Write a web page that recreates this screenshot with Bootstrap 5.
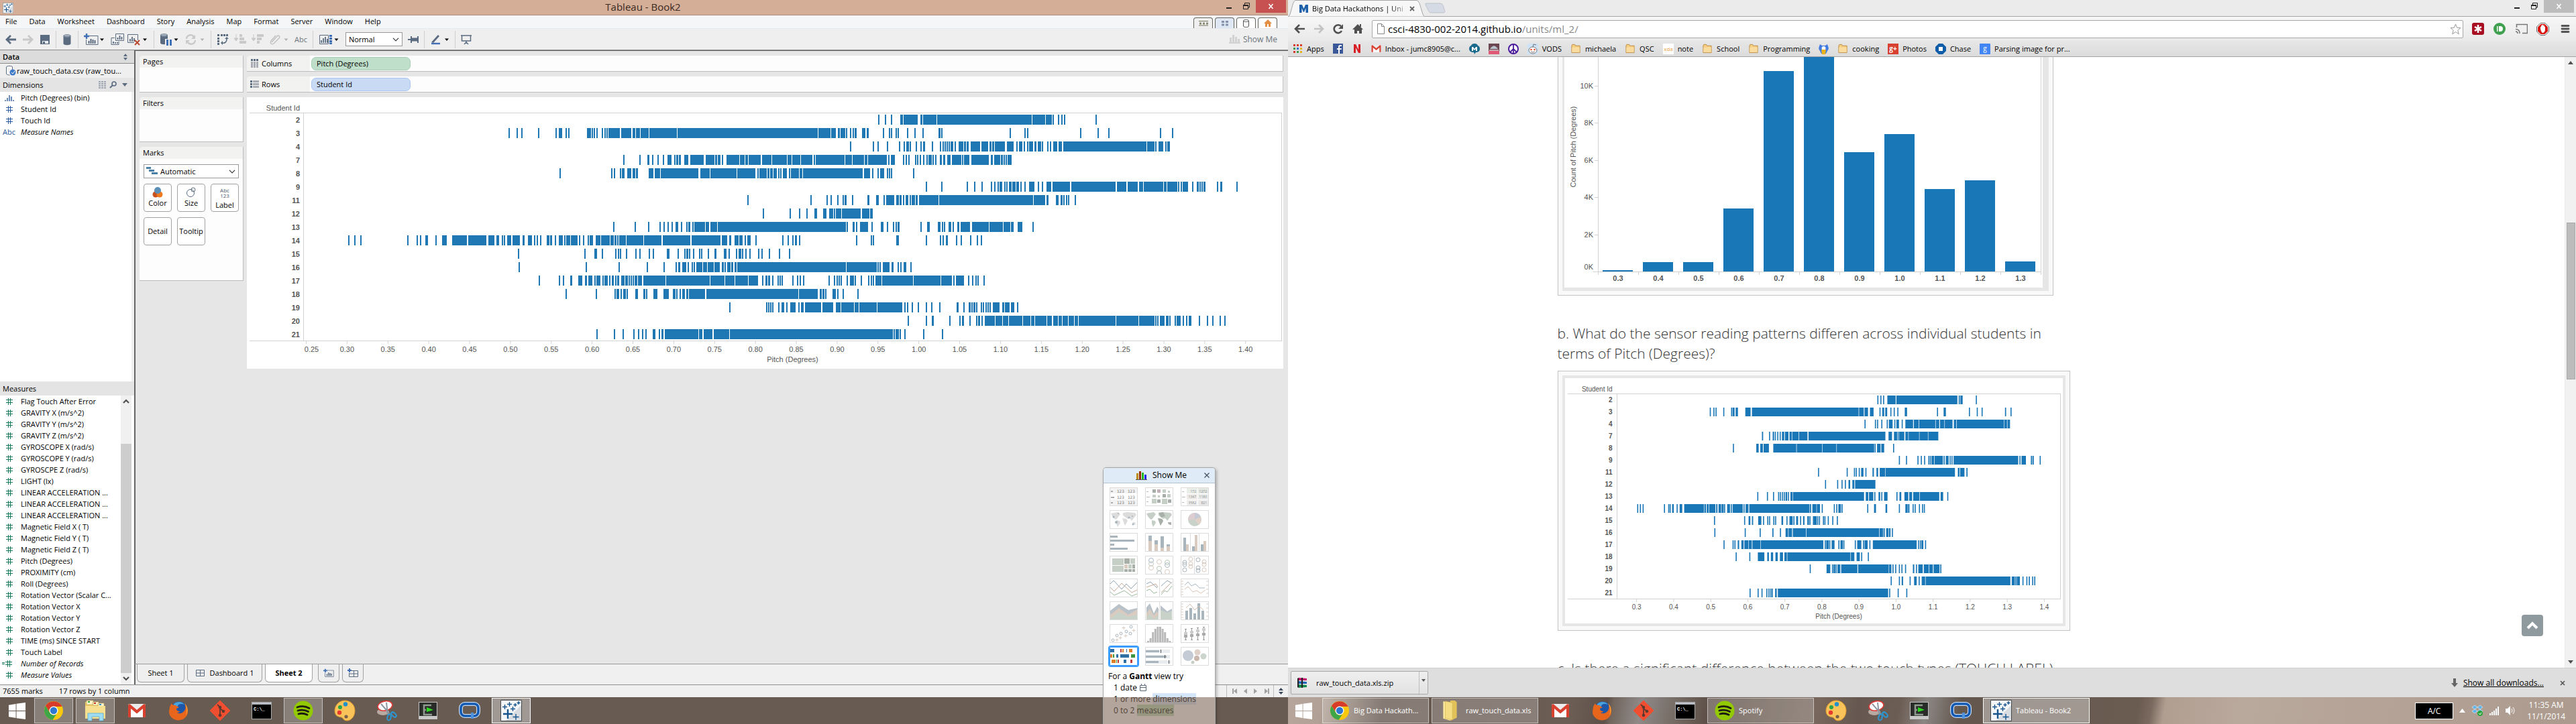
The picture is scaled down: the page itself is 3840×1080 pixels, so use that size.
<!DOCTYPE html>
<html lang="en">
<head>
<meta charset="utf-8">
<title>Tableau - Book2</title>
<link href="https://cdn.jsdelivr.net/npm/bootstrap@5.3.0/dist/css/bootstrap.min.css" rel="stylesheet">
<script src="https://cdn.jsdelivr.net/npm/bootstrap@5.3.0/dist/js/bootstrap.bundle.min.js"></script>
<style>
:root{--ui:"Open Sans","Noto Sans",sans-serif;--chart:"Liberation Sans",Arial,sans-serif}
body{font-family:var(--ui);font-size:11px;line-height:16px;color:#000;overflow:hidden;background:#675b52}
svg{display:block;flex:none}
button{padding:0;border:0;background:none;color:inherit;line-height:inherit}
h1,h2,h3,p,ul{margin:0;padding:0;font-size:inherit;line-height:inherit;font-weight:400}
ul{list-style:none}
.monitor{width:50%;height:100vh}
.min-h0{min-height:0}
.eq{flex:1 1 0}
.t12{font-size:12px}
/* ---- Tableau frame ---- */
.tb-title{height:23px;background:#d5ae98;border-bottom:1px solid #b08d7a}
.tb-title h1{font-size:15px;line-height:21px;color:#3a2a20}
.winctl{height:22px;padding-right:3px}
.winctl .close-x{width:45px;height:19px;margin-left:-8px;background:#c75050}
.winctl .close-x.idle{background:#bcbcbc}
.tb-menu{height:20px;background:#f5f6f8;border-bottom:1px solid #e6e9ee}
.tb-menu .menus{gap:18px}
.tb-menu .views{gap:3px}
.tb-menu a{color:#000;text-decoration:none;line-height:20px}
.viewtab{width:29px;height:16px;border:1px solid #66665c;border-bottom:0;border-radius:4px 4px 0 0;background:#fff}
.viewtab.t1{background:#efefef}.viewtab.t2{background:#dfe6f4}
.tb-tools{height:32px;background:#efefef;border-bottom:1px solid #8c8c8c}
.vsep{width:1px;height:26px;background:#cfcfcf}
.flat-select{border:1px solid #9a9a9a;border-radius:0;font-size:11px;line-height:16px;padding:1px 18px 1px 4px;background-position:right 4px center;background-size:10px 10px;color:#000;height:21px}
.w-fit{width:85px}
.tb-side{width:200px;background:#efefef}
.side-head{height:20px;background:#dcdcdc;border-bottom:1px solid #8c8c8c;line-height:19px;font-weight:600}
.side-src{height:21px;line-height:21px}
.side-sub{height:21px;background:#e4e4e4;line-height:21px}
.fields{background:#fff}
.fields li{height:17px;line-height:17px;display:flex;align-items:center;white-space:nowrap}
.fields .gl{width:31px;display:flex;align-items:center;justify-content:center;padding-right:4px;color:#2c5aa0}
.meas{padding-bottom:6px}
.meas .gl{color:#177a5c}
.calc::before{content:"";width:4px;height:3px;border:solid #177a5c;border-width:1px 0;margin-left:-5px}
.sb{width:16px;background:#f0f0f0}
.sb .sb-thumb{background:#cdcdcd}
.tb-main{background:#e6e6e6;border-left:2px solid #666;border-top:1px solid #666;padding:7px 7px 0 6px;gap:5px}
.shelf-card{width:155px;background:#fdfdfd;border-right:1px solid #bdbdbd;border-bottom:1px solid #bdbdbd;border-radius:5px 0 0 0;overflow:hidden}
.shelf-card h3{height:18px;line-height:18px;background:#f2f2f0;padding-left:5px}
.c-pages{height:55px}.c-filters{height:67px}.c-marks{height:200px}
.col-gap{gap:7px}
.mark-in{margin:8px 6px 0}
.mark-btn{width:42px;height:42px;border:1px solid #a3a3a3;border-radius:4px;background:#fff}
.shelf{height:24px;background:#fdfdfd;border-right:1px solid #c4c4c4;border-bottom:1px solid #bdbdbd;border-radius:5px 0 0 0;overflow:hidden}
.shelf .lab{width:94px;background:#f2f2f0;padding-left:5px}
.pill{width:148px;height:20px;margin:2px;border-radius:7px;line-height:18px;padding-left:7px}
.pill.green{background:#bfdfca;border:1px solid #a8cfb4}.pill.blue{background:#c9daf5;border:1px solid #aac4ee}
.viz{background:#fff;height:405px;padding:0 2px 0 4px;font-family:var(--chart);color:#555}
.viz .vhead{height:23px;width:75px;line-height:32px}
.rowlabs{width:80px;font-weight:700;padding-right:5px}
.rowlabs div{height:20px;line-height:20px}
.plot-top{border-top:1px solid #d2d2d2;border-bottom:1px solid #d2d2d2;height:341px}
.plot-box{border-left:1px solid #d2d2d2;border-right:1px solid #d2d2d2}
.sheet-tabs{height:31px;background:#f0f0f0;border-top:1px solid #9c9c9c;border-left:2px solid #666;padding-left:2px}
.stab{height:27px;border:1px solid #a3a3a3;border-top:0;border-radius:0 0 6px 6px;background:#efefef}
.stab.on{background:#fff;font-weight:700}
.s70{width:71px}.s112{width:112px}.s32{width:32px}
.tb-status{height:19px;background:#f0f0f0;border-top:1px solid #8f8f8f;line-height:18px}
/* ---- Show Me panel ---- */
.showme{position:absolute;right:108px;bottom:0;width:168px;height:383px;background:#fff;border:1px solid #a8a8a8;border-bottom:0;border-radius:5px 5px 0 0;box-shadow:2px 2px 4px #0004;z-index:5;overflow:hidden}
.showme header{height:23px;background:#dfebf6;border-bottom:1px solid #b3c2d0;font-size:12px}
.showme .grid-3{display:grid;grid-template-columns:repeat(3,42px);column-gap:11px;row-gap:6px;padding:6px 0 0 9px}
.thumb{width:42px;height:28px;border:1px solid #dcdcdc;background:#fff}
.thumb.on{outline:2px solid #3b9cff;border-color:#3b9cff;border-radius:2px}
.showme .hint{font-size:12px;line-height:17px;padding:7px 0 0 7px}
.showme .veil{position:absolute;left:0;right:0;bottom:0;height:40px;background:rgba(128,105,90,.6)}
.dimtag{background:#d5e6fb}.mestag{background:#b9dcb9}
/* ---- taskbars ---- */
.taskbar{height:40px;background:#675b52;color:#fff}
.taskbar.wide{background:linear-gradient(100deg,#b7a69b 0,#b0a095 50px,#65574e 140px,#6b5d54 420px,#5e5149 470px,#73675f 480px,#8f8a88 520px,#7b726c 560px,#5e5048 620px,#77675c 780px,#665850 840px,#6c5d54 900px,#8b8683 940px,#64574e 990px,#6b5c52 1250px,#79695e 1270px,#b09e91 1290px,#b9a89c 1400px,#ab9a8d 1920px)}
.tk{height:38px;width:58px;display:flex;align-items:center;justify-content:center}
.tk.start{width:51px}
.tk.run{background:#ffffff38;border:1px solid #ffffff80}
.tk.cur{background:#ffffff60;border:1px solid #fff}
.tk.label{width:159px;justify-content:flex-start;padding-left:10px;gap:6px;white-space:nowrap}
.battery{width:57px;height:25px;line-height:23px;background:#000;border:1px solid #fff}
.clock{line-height:17px}
/* ---- Chrome frame ---- */
.cr-strip{height:25px;background:#ebebeb;border-bottom:1px solid #a5a5a5}
.cr-tab{position:relative;width:204px;height:25px;margin-bottom:-1px}
.cr-tab .shape{position:absolute;left:0;top:0}
.cr-tab .txt{position:relative;height:25px;padding:0 15px 0 17px;gap:6px}
.fade-txt{background:linear-gradient(90deg,#000 115px,#0003 140px);-webkit-background-clip:text;background-clip:text;color:transparent}
.cr-bar{height:36px;background:linear-gradient(#f7f7f7,#e9e9e9);padding:0 9px;gap:13px}
.omni{height:27px;border:1px solid #a9a9a9;border-radius:2px;background:#fff;font-size:15px;line-height:24px;padding:0 2px 0 6px}
.cr-marks{height:24px;background:linear-gradient(#e6e6e6,#dcdcdc);border-bottom:1px solid #a3a3a3;padding:0 8px;gap:13px}
.cr-marks a{color:#000;text-decoration:none;display:flex;align-items:center;gap:6px;white-space:nowrap}
.page-body{background:#fff;overflow:hidden;flex:1 1 0;min-height:0}
.column-text{margin-left:21.1%;width:764px}
.column-text h2{font-family:"Open Sans",sans-serif;font-weight:300;font-size:21px;line-height:30px;color:#333}
.fig-hist{width:739px;height:356px;border:1px solid #c4c4c4;border-top:0;background:#f9f9f9;padding:0 6px 6px 6px;margin:0 0 41px}
.fig-hist .mat{border:solid #e6e6e6;border-width:0 9px 5px 3px;background:#fff;height:349px}
.fig-gantt{width:764px;height:388px;border:1px solid #c4c4c4;background:#f9f9f9;padding:6px;margin:11px 0 41px;font-family:var(--chart);color:#555;font-size:10px}
.fig-gantt .mat{border:4px solid #e6e6e6;background:#fff;height:374px;padding:0 3px 0 4px}
.fig-gantt .vhead{height:23px;width:67px;line-height:34px}
.fig-gantt .rowlabs{width:73px;padding-right:6px}
.fig-gantt .rowlabs div{height:18px;line-height:18px}
.fig-gantt .plot-top{height:307px}
.page-sb{width:17px;background:#f1f1f1;border-left:1px solid #eaeaea}
.page-sb .thumb-v{width:13px;height:234px;background:#bcbcbc;border:1px solid #a8a8a8;flex:none}
.totop{position:absolute;right:49px;bottom:47px;width:32px;height:32px;border-radius:4px;background:#8f9a9f}
.cr-dl{height:44px;background:#dedede;border-top:1px solid #d0d0d0}
.dl-item{width:205px;height:35px;border:1px solid #a9a9a9;border-radius:2px;background:linear-gradient(#efefef,#e2e2e2)}
.dl-item .drop{width:13px;height:33px;border-left:1px solid #bdbdbd}
</style>
</head>
<body>
<svg width="0" height="0" class="position-absolute" aria-hidden="true">
<defs>
<symbol id="i-hash" viewBox="0 0 12 12"><path d="M4.500 1v10M7.500 1v10M1 3.500h10M1 7.500h10" stroke="currentColor" fill="none"/></symbol>
<symbol id="i-caret" viewBox="0 0 8 8"><path d="M1 2.500h6L4 6z" fill="currentColor"/></symbol>
<symbol id="i-win" viewBox="0 0 28 28"><path d="M1 5l11-2v10.500H1zM13 2.800L27 1v12.500H13zM1 14.500h11V25L1 23zM13 14.500h14V27l-14-1.800z" fill="#fff"/></symbol>
<symbol id="i-chrome" viewBox="0 0 30 30"><circle cx="15" cy="15" r="14" fill="#f7c80e"/><path d="M2.900 8A14 14 0 0 1 27.500 9H15a6.500 6.500 0 0 0-6 8z" fill="#d93b2b"/><path d="M2.900 8A14 14 0 0 0 13.500 29L19 20.500a6.500 6.500 0 0 1-10-3z" fill="#3fa648"/><circle cx="15" cy="15" r="6.500" fill="#fff"/><circle cx="15" cy="15" r="5.200" fill="#2f78d2"/></symbol>
<symbol id="i-folders" viewBox="0 0 34 32"><path d="M2 3h8l2 2h18v22H2z" fill="#e8c765"/><path d="M4 1h10v6H4zM13 3h9v5h-9zM21 5h9v5h-9z" fill="#fff6cf" stroke="#c8a850" stroke-width=".6"/><path d="M6 2h3v2H6z" fill="#2fa53e"/><path d="M15 4h3v2h-3z" fill="#c8362b"/><path d="M23 6h3v2h-3z" fill="#2b8fd0"/><path d="M2 9h30v19H2z" fill="#f6e08f"/><path d="M6 20h23v11h-6v-6H12v6H6z" fill="#9fdcf2" stroke="#55acd2" stroke-width=".8"/></symbol>
<symbol id="i-folder1" viewBox="0 0 26 30"><path d="M3 2l10 1v26L3 26z" fill="#f8e79c"/><path d="M13 1h6l3 2v22l-9 4z" fill="#e2c158"/><path d="M6 2l10 2v24L6 26z" fill="#f4dc83" stroke="#d3b34d" stroke-width=".6"/></symbol>
<symbol id="i-gmail" viewBox="0 0 28 24"><rect x="1" y="2" width="26" height="20" rx="2" fill="#ececec"/><path d="M4 22V8l10 8 10-8v14z" fill="#fff"/><path d="M1 4a2 2 0 0 1 3-1.500l10 8.500L24 2.500A2 2 0 0 1 27 4v17a1 1 0 0 1-1 1h-3V9l-9 7.500L5 9v13H2a1 1 0 0 1-1-1z" fill="#d8402f"/></symbol>
<symbol id="i-fox" viewBox="0 0 30 30"><circle cx="16" cy="14" r="12.500" fill="#1f57a8"/><path d="M8 5c5-4 12-4 16 1-5-2-9-1-10 2s-4 2-6 3z" fill="#49a3dd"/><path d="M2 9c0 3-1 5-1 8a14 13 0 0 0 28-1c0-6-2-9-5-12 2 4 2 8 0 11s-7 6-11 3c2 0 4-1 4-2-3 0-5-1-5-4 1-1 3-1 4-2-1-1-4-1-5-3-4 0-6-1-7-3 0 2-1 4-2 5z" fill="#e8661b"/><path d="M24 4c5 5 6 12 2 18 2-6 2-12-2-18z" fill="#fbb034"/></symbol>
<symbol id="i-git" viewBox="0 0 32 32"><path d="M16 1l15 15-15 15L1 16z" fill="#f04e31" stroke="#f04e31" stroke-linejoin="round"/><path d="M12 7l4 4v12M16 13l5 4" stroke="#5b3a30" stroke-width="1.800" fill="none"/><circle cx="16" cy="11" r="2.300" fill="#5b3a30"/><circle cx="16" cy="23" r="2.300" fill="#5b3a30"/><circle cx="21" cy="17" r="2.300" fill="#5b3a30"/></symbol>
<symbol id="i-cmd" viewBox="0 0 30 26"><rect x=".5" y=".5" width="29" height="25" fill="#000" stroke="#a9a9a9"/><rect x="1" y="1" width="28" height="3" fill="#b9bec6"/><text x="3" y="13" font-family="Liberation Mono,monospace" font-size="7" font-weight="700" fill="#fff">C:\_</text></symbol>
<symbol id="i-spot" viewBox="0 0 30 30"><circle cx="15" cy="15" r="14.500" fill="#93c901"/><path d="M6 10c6-2 13-1.500 18 1.500M7 15c5-1.500 11-1 15.500 1.500M8 20c4.500-1.300 9-.8 13 1.300" stroke="#1d1d10" stroke-width="2.800" fill="none" stroke-linecap="round"/></symbol>
<symbol id="i-palette" viewBox="0 0 32 32"><path d="M16 1c8 0 15 6 15 15 0 8-5 15-12 15-5 0-5-4-8-5-5-1-10-2-10-10S8 1 16 1z" fill="#f9c35a" stroke="#e29a2a"/><circle cx="9" cy="11" r="3" fill="#2da34a"/><circle cx="17" cy="6.500" r="3.200" fill="#2490c9"/><circle cx="8" cy="19" r="3.200" fill="#e63b2e"/><circle cx="18" cy="25" r="2.600" fill="#7a6048"/></symbol>
<symbol id="i-snip" viewBox="0 0 32 32"><ellipse cx="11" cy="18" rx="9" ry="5" fill="#b8a9a2"/><ellipse cx="14" cy="9" rx="11" ry="7" fill="#fff" stroke="#dd3b36" stroke-width="1.600" transform="rotate(-12 14 9)"/><path d="M8 6l13 15M16 4l2 18" stroke="#8d979f" stroke-width="2"/><ellipse cx="20" cy="26" rx="2.600" ry="4.500" fill="none" stroke="#2b97d4" stroke-width="2" transform="rotate(14 20 26)"/><ellipse cx="27" cy="22" rx="2.600" ry="4.500" fill="none" stroke="#2b97d4" stroke-width="2" transform="rotate(-45 27 22)"/></symbol>
<symbol id="i-ctm" viewBox="0 0 28 26"><rect x=".5" y=".5" width="27" height="25" fill="#2a2c2a" stroke="#c3c3c3"/><rect x="1" y="21" width="26" height="4" fill="#c9c9c9"/><path d="M19 5H8v14h12M8 12h3" fill="none" stroke="#8f9a8f" stroke-width="2.500"/><path d="M12 8l10 4-10 3z" fill="#2bdc1e"/></symbol>
<symbol id="i-q" viewBox="0 0 32 26"><rect x="3" y="3" width="26" height="18" rx="6" fill="none" stroke="#c9dcf2" stroke-width="6"/><rect x="3" y="3" width="26" height="18" rx="6" fill="none" stroke="#1259b3" stroke-width="3.600"/><path d="M20 16v9" stroke="#4f93dd" stroke-width="4"/></symbol>
<symbol id="i-tab" viewBox="0 0 32 32"><path d="M.5.5h31v31H.5z" fill="#f4f6f8" stroke="#44494e"/><path d="M31 8v23H8z" fill="#d8dbdf"/><path d="M11 14v14M4 21h14" stroke="#16548e" stroke-width="2.400"/><path d="M6.500 7v7M3 10.500h7M13.500 3v7M10 6.500h7M18.500 10v7M15 13.500h7M22 5v5M19.500 7.500h5M27 2v5M24.500 4.500h5M23 21v9M18.500 25.500h9" stroke="#16548e" stroke-width="1.400"/></symbol>
<symbol id="i-bmf" viewBox="0 0 16 16"><path d="M1.500 3.500l1-2h4l1 2h7v11h-13z" fill="#f7cf84" stroke="#b98a40"/><path d="M2 6h12v8H2z" fill="#fbdca0"/></symbol>
<symbol id="i-newsheet" viewBox="0 0 22 18"><path d="M6.500 3.500H21v13H3.500V9" fill="none" stroke="#5b6b80"/><path d="M7.500 15v-4M10.500 15V8M13.500 15v-6M16.500 15v-5" stroke="#5b6b80" stroke-width="2"/><path d="M4 0v8M0 4h8" stroke="#3f6fb5" stroke-width="2.400"/></symbol>
<symbol id="i-cyl" viewBox="0 0 13 18"><path d="M1 3v12c0 3 11 3 11 0V3z" fill="#5b6b80"/><ellipse cx="6.500" cy="3.500" rx="5.500" ry="2.500" fill="#77869a"/><ellipse cx="6.500" cy="3" rx="4" ry="1.300" fill="#a8b2bf"/></symbol>
</defs>
</svg>
<div class="d-flex">

<!-- ============ left monitor: Tableau ============ -->
<section class="monitor d-flex flex-column position-relative">
<div class="flex-fill d-flex flex-column min-h0">
<header class="tb-title d-flex align-items-start">
  <div class="eq"><svg width="16" height="16" class="ms-1 mt-1" viewBox="0 0 32 32"><use href="#i-tab"/></svg></div>
  <h1>Tableau - Book2</h1>
  <div class="winctl eq d-flex align-items-start justify-content-end gap-3">
    <button aria-label="Minimize"><svg width="9" height="20"><path d="M1 11h8v2H1z" fill="#222"/></svg></button>
    <button aria-label="Restore"><svg width="12" height="20"><path d="M1.500 7.500h7v6h-7zM3.500 7V4.500h7V11H9" fill="none" stroke="#222"/><path d="M1 7h8v2H1z" fill="#222"/></svg></button>
    <button class="close-x" aria-label="Close"><svg width="9" height="9" class="m-auto"><path d="M1.500 1l6 7M7.500 1l-6 7" stroke="#fff" stroke-width="1.600"/></svg></button>
  </div>
</header>
<nav class="tb-menu d-flex justify-content-between align-items-end">
  <div class="d-flex menus ps-2"><a href="#">File</a><a href="#">Data</a><a href="#">Worksheet</a><a href="#">Dashboard</a><a href="#">Story</a><a href="#">Analysis</a><a href="#">Map</a><a href="#">Format</a><a href="#">Server</a><a href="#">Window</a><a href="#">Help</a></div>
  <div class="d-flex views pe-3">
    <button class="viewtab t1" aria-label="Worksheet view"><svg width="14" height="9" class="m-auto"><path d="M0 1.500h14M0 8h14" stroke="#77775f"/><path d="M1 3.500h3v3H1zM6 3.500h3v3H6zM11 3.500h3v3h-3z" fill="#8a8a72"/></svg></button>
    <button class="viewtab t2" aria-label="Dashboard view"><svg width="10" height="9" class="m-auto"><path d="M0 1h4v3H0zM6 1h4v3H6zM0 5.500h4v3H0zM6 5.500h4v3H6z" fill="#8492aa"/></svg></button>
    <button class="viewtab" aria-label="Data view"><svg width="9" height="12" class="m-auto"><path d="M.5 2v8c0 2 8 2 8 0V2c0-2-8-2-8 0c0 2 8 2 8 0" fill="none" stroke="#555"/></svg></button>
    <button class="viewtab" aria-label="Start page"><svg width="12" height="11" class="m-auto"><path d="M6 0l6 6H0z" fill="#e58f45"/><path d="M2 6h8v5H7V7H5v4H2z" fill="#e58f45"/></svg></button>
  </div>
</nav>
<div class="tb-tools d-flex align-items-center justify-content-between">
  <div class="d-flex align-items-center gap-2 ps-1 ms-1">
    <button aria-label="Undo"><svg width="17" height="16"><path d="M16 8H3M8 2L2 8l6 6" fill="none" stroke="#5b6b80" stroke-width="2.800"/></svg></button>
    <button aria-label="Redo"><svg width="17" height="16"><path d="M1 8h13M9 2l6 6-6 6" fill="none" stroke="#c9c9c9" stroke-width="2.800"/></svg></button>
    <button aria-label="Save"><svg width="17" height="16"><path d="M2 1h14v14H2z" fill="#5b6b80"/><path d="M5 10h9v4H5z" fill="#e8ebef"/><path d="M6 11h3v3H6z" fill="#5b6b80"/></svg></button>
    <span class="vsep"></span>
    <button aria-label="Connect to data"><svg width="16" height="18" viewBox="-1 0 15 18"><use href="#i-cyl" width="13" height="18"/></svg></button>
    <span class="vsep"></span>
    <button class="d-flex align-items-center" aria-label="New sheet"><svg width="22" height="18"><use href="#i-newsheet"/></svg><svg width="10" height="8"><use href="#i-caret"/></svg></button>
    <div class="d-flex gap-1">
      <button aria-label="Duplicate"><svg width="20" height="18"><path d="M7.500.5h12v10h-12zM6 6.500H1v10h11V12" fill="none" stroke="#5b6b80"/><path d="M10.500 9V6M13.500 9V3M16.500 9V5M4 15v-3M7 15v-2M10 15v-2" stroke="#5b6b80" stroke-width="1.800"/></svg></button>
      <button class="d-flex align-items-center" aria-label="Clear sheet"><svg width="22" height="18"><path d="M11 13.500H1.500v-12h15V10" fill="none" stroke="#5b6b80"/><path d="M5 12V8M8 12V5M11 12V7" stroke="#5b6b80" stroke-width="1.800"/><path d="M12 10l7 7M19 10l-7 7" stroke="#b8472b" stroke-width="2"/></svg><svg width="10" height="8"><use href="#i-caret"/></svg></button>
    </div>
    <span class="vsep"></span>
    <button class="d-flex align-items-center" aria-label="Pause updates"><svg width="19" height="20"><use href="#i-cyl" width="13" height="18"/><path d="M8 9h11v11H8z" fill="#efefef"/><path d="M10 10h3v9h-3zM15 10h3v9h-3z" fill="#3f6fb5"/></svg><svg width="11" height="8"><use href="#i-caret"/></svg></button>
    <button class="d-flex align-items-center gap-1" aria-label="Refresh"><svg width="17" height="16"><path d="M2 7a6 6 0 0 1 11-3M15 9a6 6 0 0 1-11 3" fill="none" stroke="#c9c9c9" stroke-width="2.400"/><path d="M15 1v6H9zM1 15V9h6z" fill="#c9c9c9"/></svg><svg width="9" height="8" class="opacity-25"><use href="#i-caret"/></svg></button>
    <span class="vsep"></span>
    <button aria-label="Swap"><svg width="18" height="17"><path d="M1 1h3v3H1zM6 1h3v3H6zM10 1h3v3h-3zM14 1h3v3h-3zM1 6h3v3H1zM1 10h3v3H1zM1 14h3v3H1z" fill="#5b6b80"/><path d="M8 14c5 1 7-2 7-6" fill="none" stroke="#5b6b80" stroke-width="1.600"/><path d="M12 8h6l-3-3zM9 11v6l-3-3z" fill="#5b6b80"/></svg></button>
    <button aria-label="Sort ascending"><svg width="18" height="17"><path d="M3 1v8M0 7l3 4 3-4z" stroke="#c9c9c9" fill="#c9c9c9"/><path d="M8 1h4v4H8zM8 6h7v4H8zM8 11h10v4H8z" fill="#c9c9c9"/></svg></button>
    <button aria-label="Sort descending"><svg width="18" height="17"><path d="M3 1v8M0 7l3 4 3-4z" stroke="#c9c9c9" fill="#c9c9c9"/><path d="M8 1h10v4H8zM8 6h7v4H8zM8 11h4v4H8z" fill="#c9c9c9"/></svg></button>
    <button class="d-flex align-items-center gap-1" aria-label="Group"><svg width="17" height="16"><path d="M4 12L12 3c2-2 5 0 3 3L7 14c-3 2-6 0-4-4l7-8" fill="none" stroke="#c2c2c2" stroke-width="1.500"/></svg><svg width="9" height="8" class="opacity-25"><use href="#i-caret"/></svg></button>
    <button class="text-secondary" aria-label="Show labels">Abc</button>
    <span class="vsep"></span>
    <button class="d-flex align-items-center" aria-label="Show cards"><svg width="21" height="16"><path d="M1.500 1.500h13v13h-13z" fill="none" stroke="#5b6b80"/><path d="M4 13V9M7 13V6M10 13V4M13 13V7" stroke="#5b6b80" stroke-width="1.800"/><path d="M16 1h4v3h-4zM16 5h4v3h-4zM16 9h4v3h-4zM16 12.500h4v2.500h-4z" fill="#3f6fb5"/></svg><svg width="11" height="8"><use href="#i-caret"/></svg></button>
    <select class="form-select flat-select w-fit" aria-label="Fit"><option>Normal</option></select>
    <button aria-label="Pin"><svg width="16" height="12"><path d="M0 6h5M5 1v10M15 1v10" stroke="#5b6b80" stroke-width="2"/><path d="M5 3.500h9v5H5z" fill="#5b6b80"/></svg></button>
    <span class="vsep"></span>
    <button class="d-flex align-items-center gap-1" aria-label="Highlight"><svg width="17" height="16"><path d="M2 12L12 1l2 2L5 13z" fill="#5b6b80"/><path d="M2 14h13" stroke="#3f6fb5" stroke-width="2.400"/></svg><svg width="8" height="8"><use href="#i-caret"/></svg></button>
    <span class="vsep"></span>
    <button aria-label="Presentation mode"><svg width="16" height="16"><path d="M0 2h16M1.500 2v8h13V2M8 10v2M5 15l3-3 3 3" fill="none" stroke="#5b6b80" stroke-width="1.500"/></svg></button>
  </div>
  <button class="d-flex align-items-center gap-1 text-secondary t12 me-3" aria-label="Show Me"><svg width="17" height="13"><path d="M1 4h3v7H1zM5 0h3v11H5zM9 3h3v8H9zM13 6h3v5h-3zM0 11h17v2H0z" fill="#d2d2d2"/></svg><span>Show Me</span></button>
</div>

<div class="flex-fill d-flex min-h0">
  <aside class="tb-side d-flex flex-column">
    <h2 class="side-head d-flex justify-content-between align-items-center px-1">Data<svg width="9" height="10" class="me-1"><path d="M1 4h6L4 0zM1 6h6L4 10z" fill="#5b6b80"/></svg></h2>
    <div class="side-src d-flex align-items-center ps-2"><svg width="17" height="17"><path d="M1.500 3v10c0 1 3 2 5 2M10.500 7V3c0-2-9-2-9 0" fill="#fff" stroke="#5b6b80"/><circle cx="11" cy="11" r="4.500" fill="#3f7bc8"/><path d="M9 11l2 2 3-4" stroke="#fff" fill="none"/></svg>raw_touch_data.csv (raw_tou...</div>
    <h3 class="side-sub d-flex align-items-center px-1">Dimensions
      <svg width="46" height="11" class="ms-auto me-1"><path d="M1 1h12M1 4h12M1 7h12M1 10h12" stroke="#5b6b80" stroke-dasharray="3 1"/><circle cx="24" cy="4" r="3" fill="none" stroke="#5b6b80" stroke-width="1.600"/><path d="M22 6l-4 4" stroke="#5b6b80" stroke-width="2"/><path d="M36 3h8l-4 5z" fill="#5b6b80"/></svg></h3>
    <ul class="fields flex-fill me-1">
      <li><span class="gl"><svg width="14" height="10"><path d="M1 10V8M4 10V5M7 10V1M10 10V3M13 10V8" stroke="currentColor" stroke-width="1.400"/></svg></span>Pitch (Degrees) (bin)</li>
      <li><span class="gl"><svg width="12" height="12"><use href="#i-hash"/></svg></span>Student Id</li>
      <li><span class="gl"><svg width="12" height="12"><use href="#i-hash"/></svg></span>Touch Id</li>
      <li><span class="gl">Abc</span><i>Measure Names</i></li>
    </ul>
    <h3 class="side-sub px-1">Measures</h3>
    <div class="d-flex bg-white">
      <ul class="fields meas flex-fill" id="measures"></ul>
      <div class="sb d-flex flex-column align-items-center me-1">
        <svg width="16" height="72"><path d="M4 11l4-4 4 4" fill="none" stroke="#505050" stroke-width="2.200"/></svg>
        <div class="sb-thumb w-100 flex-fill"></div>
        <svg width="16" height="17"><path d="M4 6l4 4 4-4" fill="none" stroke="#505050" stroke-width="2.200"/></svg>
      </div>
    </div>
  </aside>
  <div class="flex-fill d-flex flex-column">
  <main class="tb-main flex-fill d-flex">
    <div class="d-flex flex-column col-gap">
      <section class="shelf-card c-pages"><h3>Pages</h3></section>
      <section class="shelf-card c-filters"><h3>Filters</h3></section>
      <section class="shelf-card c-marks"><h3>Marks</h3>
        <div class="position-relative mark-in">
          <select class="form-select flat-select ps-4" aria-label="Mark type"><option>Automatic</option></select>
          <svg width="18" height="12" class="position-absolute top-0 start-0 ms-1 mt-1"><path d="M0 0h7v3H0zM4 4h8v3H4zM8 8h9v3H8z" fill="#4a7fa8"/></svg>
        </div>
        <div class="d-flex flex-wrap gap-2 mark-in">
          <button class="mark-btn"><svg width="16" height="16" class="mx-auto"><circle cx="5" cy="11" r="4.500" fill="#c8501c"/><circle cx="11" cy="11" r="4.500" fill="#ee7a22"/><circle cx="8" cy="5" r="5" fill="#5a8fb8"/></svg>Color</button>
          <button class="mark-btn"><svg width="14" height="16" class="mx-auto"><circle cx="6" cy="9" r="5.500" fill="none" stroke="#5b6b80"/><circle cx="10" cy="4" r="3" fill="none" stroke="#5b6b80"/></svg>Size</button>
          <button class="mark-btn"><svg width="24" height="21" class="mx-auto"><text x="12" y="10" text-anchor="middle" font-size="8" fill="#4a5668">Abc</text><text x="12" y="18" text-anchor="middle" font-size="8" fill="#4a5668">123</text></svg>Label</button>
          <button class="mark-btn">Detail</button>
          <button class="mark-btn">Tooltip</button>
        </div>
      </section>
    </div>
    <div class="flex-fill d-flex flex-column col-gap">
      <div class="shelf d-flex"><div class="lab d-flex align-items-center gap-1"><svg width="13" height="13"><path d="M1 0h3v3H1zM5 0h3v3H5zM9 0h3v3H9z" fill="#5b6b80"/><path d="M1 4h3v9H1zM5 4h3v9H5zM9 4h3v9H9z" fill="#a9adb3"/></svg>Columns</div><div class="pill green">Pitch (Degrees)</div></div>
      <div class="shelf d-flex"><div class="lab d-flex align-items-center gap-1"><svg width="13" height="13"><path d="M0 1h3v3H0zM0 5h3v3H0zM0 9h3v3H0z" fill="#5b6b80"/><path d="M4 1h9v3H4zM4 5h9v3H4zM4 9h9v3H4z" fill="#a9adb3"/></svg>Rows</div><div class="pill blue">Student Id</div></div>
      <div class="viz">
        <div class="vhead text-end">Student Id</div>
        <div class="plot-top d-flex"><div class="rowlabs text-end"></div><div class="plot-box flex-fill"><svg id="plotMain" width="100%" height="339"></svg></div></div>
        <div class="d-flex"><div class="rowlabs"></div><svg id="axisMain" class="flex-fill" width="1" height="36"></svg></div>
      </div>
    </div>
  </main>
  <div class="sheet-tabs d-flex align-items-start gap-1">
    <button class="stab s70">Sheet 1</button>
    <button class="stab s112 d-flex align-items-center justify-content-center gap-2"><svg width="13" height="10"><path d="M.5.5h12v9H.5zM.5 5h12M6.500.5v9" fill="none" stroke="#5b6b80"/></svg>Dashboard 1</button>
    <button class="stab on s70">Sheet 2</button>
    <button class="stab s32 ms-1" aria-label="New worksheet"><svg width="16" height="14" class="m-auto" viewBox="0 0 22 18"><use href="#i-newsheet"/></svg></button>
    <button class="stab s32" aria-label="New dashboard"><svg width="16" height="14" class="m-auto"><path d="M5 3.500h10.500v9h-13V7M3 8h12M9.500 4v8" fill="none" stroke="#5b6b80"/><path d="M3 0v6M0 3h6" stroke="#3f6fb5" stroke-width="2"/></svg></button>
  </div>
  </div>
</div>
<footer class="tb-status d-flex align-items-center">
  <span class="ms-1">7655 marks</span><span class="ms-4">17 rows by 1 column</span>
  <svg width="92" height="18" class="ms-auto"><path d="M.5 0v18M70.500 0v18" stroke="#bdbdbd"/><path d="M9 5h2v8H9zM16 5v8l-5-4zM31 5v8l-5-4zM41 5v8l5-4zM57 5v8l5-4zM62 5h2v8h-2z" fill="#a2a2a2"/><path d="M78 8h7l-3.500-4zM78 10h7l-3.500 4z" fill="#3d4a5c"/></svg>
</footer>
</div>
<footer class="taskbar d-flex align-items-center">
  <button class="tk start" aria-label="Start"><svg width="27" height="27"><use href="#i-win"/></svg></button>
  <div class="d-flex gap-1 flex-fill" id="taskLeft"></div>
</footer>

<aside class="showme">
  <header class="d-flex align-items-center"><svg width="17" height="13" class="ms-5"><path d="M1 3h3v9H1z" fill="#c08a00"/><path d="M5 0h3v12H5z" fill="#962b00"/><path d="M9 2h3v10H9z" fill="#22b522"/><path d="M13 5h3v7h-3z" fill="#2222ee"/><path d="M0 12h17v1H0z" fill="#555"/></svg><span class="ms-2">Show Me</span>
  <button class="ms-auto me-2" aria-label="Close Show Me"><svg width="8" height="8"><path d="M.5.5l7 7M7.500.5l-7 7" stroke="#4a5668" stroke-width="1.400"/></svg></button></header>
  <div class="grid-3" id="thumbs"></div>
  <div class="hint">For a <b>Gantt</b> view try<div class="d-flex align-items-center gap-1 ps-1 ms-1">1 date <svg width="10" height="11"><path d="M.5 2.500h9v8h-9zM.5 5.500h9M2.500 0v3M7.500 0v3" fill="none" stroke="#5b6b80"/></svg></div><div class="ps-1 ms-1">1 or more <span class="dimtag">dimensions</span></div><div class="ps-1 ms-1">0 to 2 <span class="mestag">measures</span></div></div>
  <div class="veil"></div>
</aside>
</section>

<!-- ============ right monitor: Chrome ============ -->
<section class="monitor d-flex flex-column">
<div class="flex-fill d-flex flex-column min-h0">
<header class="cr-strip d-flex justify-content-between align-items-start">
  <div class="d-flex align-items-center">
    <div class="cr-tab"><svg class="shape" width="204" height="25"><path d="M0 25C5 24 6 1 11 .5H192C198 1 199 24 204 25z" fill="#f7f7f7" stroke="#a5a5a5"/></svg>
      <div class="txt d-flex align-items-center"><svg width="13" height="12"><path d="M0 0h4l2.500 6L9 0h4v12H9.500V5L7 11H6L3.500 5v7H0z" fill="#1d5fa8"/></svg><span class="fade-txt">Big Data Hackathons | Uni</span><button class="ms-auto" aria-label="Close tab"><svg width="8" height="8"><path d="M1 1l6 6M7 1L1 7" stroke="#666" stroke-width="1.800"/></svg></button></div></div>
    <button aria-label="New tab"><svg width="32" height="16"><path d="M1 1h22q3 0 4 3l3 9q0 2-2 2H9q-2 0-3-2L1 3z" fill="#d5dbe4" stroke="#bfc3c9"/></svg></button>
  </div>
  <div class="winctl d-flex align-items-start gap-3">
    <button aria-label="Minimize"><svg width="9" height="20"><path d="M1 11h8v2H1z" fill="#222"/></svg></button>
    <button aria-label="Restore"><svg width="12" height="20"><path d="M1.500 7.500h7v6h-7zM3.500 7V4.500h7V11H9" fill="none" stroke="#222"/><path d="M1 7h8v2H1z" fill="#222"/></svg></button>
    <button class="close-x idle" aria-label="Close"><svg width="9" height="9" class="m-auto"><path d="M1.500 1l6 7M7.500 1l-6 7" stroke="#fff" stroke-width="1.600"/></svg></button>
  </div>
</header>
<div class="cr-bar d-flex align-items-center">
  <button aria-label="Back"><svg width="16" height="16"><path d="M16 8H3M8 2L2 8l6 6" fill="none" stroke="#505050" stroke-width="2.600"/></svg></button>
  <button aria-label="Forward"><svg width="16" height="16"><path d="M1 8h12M8 2l6 6-6 6" fill="none" stroke="#c3c3c3" stroke-width="2.600"/></svg></button>
  <button aria-label="Reload"><svg width="16" height="16"><path d="M13 11a6 6 0 1 1-1-7" fill="none" stroke="#505050" stroke-width="2.600"/><path d="M15 1v7H8z" fill="#505050"/></svg></button>
  <button aria-label="Home"><svg width="16" height="16"><path d="M8 1l8 8h-2v6h-4v-4H7v4H3V9H0zM11 1h2v4h-2z" fill="#505050"/></svg></button>
  <div class="omni flex-fill d-flex align-items-center gap-1">
    <svg width="13" height="16"><path d="M1.500.5h6l4 4v11h-10zM7.500.5v4h4" fill="#fff" stroke="#888"/></svg>
    <a href="#" class="text-black text-decoration-none flex-fill">csci-4830-002-2014.github.io<span class="text-black-50">/units/ml_2/</span></a>
    <button aria-label="Bookmark this page"><svg width="17" height="17"><path d="M8.500 1l2.200 5.300 5.300.3-4.200 3.600 1.500 5.600-4.800-3.200-4.800 3.200 1.500-5.600L1 6.600l5.300-.3z" fill="#fff" stroke="#999"/></svg></button>
  </div>
  <button aria-label="LastPass"><svg width="19" height="18"><rect width="18" height="18" rx="3" fill="#a80f22"/><path d="M9 3v12M4 6l10 6M14 6L4 12" stroke="#fff" stroke-width="2.600"/></svg></button>
  <button aria-label="Pushbullet"><svg width="19" height="18"><circle cx="9" cy="9" r="9" fill="#3fa050"/><path d="M5 5h1.500v8H5zM8 5h2q4 0 4 4t-4 4H8z" fill="#fff"/></svg></button>
  <button aria-label="Cast"><svg width="19" height="16"><path d="M2.500 6V1.500h16v13H11" fill="none" stroke="#777" stroke-width="1.600"/><path d="M1 12q3 0 3 3M1 8.500q6 0 6 6.500" fill="none" stroke="#777" stroke-width="1.500"/></svg></button>
  <button aria-label="Adblock"><svg width="19" height="19"><path d="M6 .5h7L18.500 6v7L13 18.500H6L.5 13V6z" fill="#fff" stroke="#666"/><path d="M6.500 2h6L17 6.500v6L12.500 17h-6L2 12.500v-6z" fill="#d8150f"/><path d="M6 9V6h1V4h1.500V3h1.500v1H12v2h1v5q-1 4-4 4-2-1-3-6z" fill="#fff"/></svg></button>
  <button class="ms-1" aria-label="Menu"><svg width="14" height="14"><path d="M2 2.500h10M2 7h10M2 11.500h10" stroke="#555" stroke-width="2.800" stroke-linecap="round"/></svg></button>
</div>
<nav class="cr-marks d-flex align-items-center">
  <a href="#"><svg width="14" height="14"><path d="M0 0h3v3H0zM0 10h3v3H0z" fill="#d83b2b"/><path d="M5 0h3v3H5zM10 0h3v3h-3z" fill="#d83b2b"/><path d="M0 5h3v3H0zM5 10h3v3H5z" fill="#3c9a46"/><path d="M5 5h3v3H5z" fill="#2f6fd0"/><path d="M10 5h3v3h-3zM10 10h3v3h-3z" fill="#e8b21e"/></svg>Apps</a>
  <a href="#" aria-label="Facebook"><svg width="15" height="15"><path d="M0 0h15v15H0z" fill="#3b5998"/><path d="M8 15V9H6V7h2V5q0-3 3-3h2v2h-2q-1 0-1 1v2h3l-.5 2H10v6z" fill="#fff"/></svg></a>
  <a href="#" aria-label="Netflix"><svg width="16" height="13"><path d="M3 0h3l4 8V0h3v13h-3L6 5v8H3z" fill="#d81f26"/></svg></a>
  <a href="#"><svg width="15" height="13" viewBox="0 0 28 24"><use href="#i-gmail"/></svg>Inbox - jumc8905@c...</a>
  <a href="#" aria-label="M"><svg width="16" height="16"><path d="M8 0q4 0 5 3 3 1 3 5 0 5-6 5l-2 3-1-3Q0 13 0 8q0-4 3-5 1-3 5-3z" fill="#1a6a8e"/><path d="M4 11V5h2l2 3 2-3h2v6h-2V8l-2 2-2-2v3z" fill="#fff"/></svg></a>
  <a href="#" aria-label="Band"><svg width="16" height="16"><path d="M0 0h16v16H0z" fill="#6c4752"/><path d="M2 8q6-9 12 0z" fill="#b8c3d0"/><path d="M0 11h16v5H0z" fill="#e05a78"/><path d="M1 9h14v2H1z" fill="#c9a9b0"/></svg></a>
  <a href="#" aria-label="Peace"><svg width="16" height="16"><circle cx="8" cy="8" r="7" fill="#fff" stroke="#4b1a9a" stroke-width="2"/><path d="M8 1v14M8 8l-5 5M8 8l5 5" stroke="#4b1a9a" stroke-width="1.800"/></svg></a>
  <a href="#"><svg width="16" height="16"><path d="M0 0h16v16H0z" fill="#cfe3f7"/><ellipse cx="8" cy="10" rx="6" ry="5" fill="#fff" stroke="#555" stroke-width=".8"/><circle cx="5.500" cy="9" r="1.300" fill="#f04b23"/><circle cx="10.500" cy="9" r="1.300" fill="#f04b23"/><path d="M5 12q3 2 6 0M8 5l1-4 4 1" fill="none" stroke="#555" stroke-width=".8"/></svg>VODS</a>
  <a href="#"><svg width="16" height="15"><use href="#i-bmf"/></svg>michaela</a>
  <a href="#"><svg width="16" height="15"><use href="#i-bmf"/></svg>QSC</a>
  <a href="#"><svg width="16" height="16"><path d="M0 0h16v16H0z" fill="#fff"/><text x="8" y="11" font-size="8" text-anchor="middle" fill="#f0a23c">xda</text></svg>note</a>
  <a href="#"><svg width="16" height="15"><use href="#i-bmf"/></svg>School</a>
  <a href="#"><svg width="16" height="15"><use href="#i-bmf"/></svg>Programming</a>
  <a href="#" aria-label="Cat"><svg width="15" height="16"><path d="M2 1l3 2h5l3-2 1 3q2 4-1 7l-2 4H4l-2-4q-3-3-1-7z" fill="#3f7be0"/><circle cx="7.500" cy="7" r="3" fill="#fff"/><path d="M4 9h7l-1 7H5z" fill="#e9b31c"/></svg></a>
  <a href="#"><svg width="16" height="15"><use href="#i-bmf"/></svg>cooking</a>
  <a href="#"><svg width="16" height="16"><path d="M0 0h16v16H0z" fill="#d8402f"/><text x="8" y="11" font-size="10" text-anchor="middle" font-weight="700" fill="#fff">g+</text></svg>Photos</a>
  <a href="#"><svg width="16" height="16"><path d="M5 0h6l5 5v6l-5 5H5l-5-5V5z" fill="#0f5ca8"/><path d="M5 5h6v6H5z" fill="#fff"/></svg>Chase</a>
  <a href="#"><svg width="16" height="16"><rect width="16" height="16" rx="1" fill="#4285f4"/><text x="8" y="11" font-size="10" text-anchor="middle" fill="#fff">g</text></svg>Parsing image for pr...</a>
</nav>
<div class="d-flex position-relative page-body">
  <article class="flex-fill overflow-hidden">
   <div class="column-text">
    <figure class="fig-hist"><div class="mat"><svg id="hist" width="713" height="344"></svg></div></figure>
    <h2>b. What do the sensor reading patterns differen across individual students in terms of Pitch (Degrees)?</h2>
    <figure class="fig-gantt"><div class="mat">
      <div class="vhead text-end">Student Id</div>
      <div class="plot-top d-flex"><div class="rowlabs text-end"></div><div class="plot-box flex-fill"><svg id="plotSmall" width="100%" height="305"></svg></div></div>
      <div class="d-flex"><div class="rowlabs"></div><svg id="axisSmall" class="flex-fill" width="1" height="34"></svg></div>
    </div></figure>
    <h2 class="text-nowrap">c. Is there a significant difference between the two touch types (TOUCH LABEL)</h2>
   </div>
   <button class="totop" aria-label="Back to top"><svg width="18" height="14" class="m-auto"><path d="M2 11l7-7 7 7" fill="none" stroke="#fff" stroke-width="4"/></svg></button>
  </article>
  <div class="page-sb d-flex flex-column align-items-center">
    <svg width="16" height="247"><path d="M4 11h8L8 6z" fill="#505050"/></svg><div class="thumb-v"></div>
    <svg width="16" height="16" class="mt-auto"><path d="M4 5h8l-4 5z" fill="#505050"/></svg>
  </div>
</div>
<footer class="cr-dl d-flex align-items-center justify-content-between ps-1 pe-3">
  <div class="dl-item d-flex align-items-center ps-2">
    <svg width="17" height="17"><path d="M3 1l12 1v3L3 5z" fill="#c0156c"/><path d="M3 6l12 1v3L3 10z" fill="#1f66b8"/><path d="M3 11l12 1v3L3 16z" fill="#128a4c"/><path d="M1 2l2-1v15l-2-1zM7 1h2v15H7z" fill="#222"/></svg>
    <span class="ms-2 ps-1">raw_touch_data.xls.zip</span><button class="drop ms-auto" aria-label="Download options"><svg width="6" height="4" class="mx-auto mb-2"><path d="M0 0h6L3 4z" fill="#555"/></svg></button>
  </div>
  <div class="d-flex align-items-center gap-2 t12"><svg width="10" height="14"><path d="M3 0h4v7h3l-5 6-5-6h3z" fill="#666"/></svg><a href="#" class="text-black">Show all downloads...</a><button class="ms-3" aria-label="Close downloads"><svg width="8" height="8"><path d="M1 1l6 6M7 1L1 7" stroke="#555" stroke-width="1.600"/></svg></button></div>
</footer>
</div>
<footer class="taskbar wide d-flex align-items-center">
  <button class="tk start" aria-label="Start"><svg width="27" height="27" class="me-1"><use href="#i-win"/></svg></button>
  <div class="d-flex gap-1 flex-fill" id="taskRight"></div>
  <div class="d-flex align-items-center gap-2 pe-3">
    <div class="battery text-center t12">A/C</div>
    <svg width="12" height="8"><path d="M1 7h9L5.500 1z" fill="#fff"/></svg>
    <svg width="17" height="18"><path d="M4 1l4 3-4 3-4-3zM12 1l4 3-4 3-4-3zM4 7l4 3-4 3-4-3zM12 7l4 3-4 3-4-3z" fill="#5fb4ec" stroke="#fff" stroke-width=".5"/><circle cx="12" cy="13" r="4" fill="#2aa53c"/><path d="M10 13l2 2 2-3" stroke="#fff" fill="none"/></svg>
    <svg width="16" height="16"><path d="M1 12h2v3H1zM4 10h2v5H4zM7 8h2v7H7zM10 5h2v10h-2zM13 2h2v13h-2z" fill="#fff"/></svg>
    <svg width="17" height="16"><path d="M1 5h3l4-4v14l-4-4H1z" fill="#fff"/><path d="M10 5q2 3 0 6M12 3q4 5 0 10" fill="none" stroke="#fff"/></svg>
    <div class="clock text-center t12 ms-2">11:35 AM<br>11/1/2014</div>
  </div>
</footer>
</section>
</div>

<script>
/* Field list; "*" marks generated fields, "=" a calculated one */
const fields = ["Flag Touch After Error","GRAVITY X (m/s^2)","GRAVITY Y (m/s^2)","GRAVITY Z (m/s^2)","GYROSCOPE X (rad/s)","GYROSCOPE Y (rad/s)","GYROSCPE Z (rad/s)","LIGHT (lx)","LINEAR ACCELERATION ...","LINEAR ACCELERATION ...","LINEAR ACCELERATION ...","Magnetic Field X ( T)","Magnetic Field Y ( T)","Magnetic Field Z ( T)","Pitch (Degrees)","PROXIMITY (cm)","Roll (Degrees)","Rotation Vector (Scalar C...","Rotation Vector X","Rotation Vector Y","Rotation Vector Z","TIME (ms) SINCE START","Touch Label","*=Number of Records","*Measure Values"];
measures.innerHTML = fields.map(f => {
  const t = f.replace(/^\*=?/, "");
  return `<li><span class="gl ${f.startsWith("*=") ? "calc" : ""}"><svg width="12" height="12"><use href="#i-hash"/></svg></span>${f[0] === "*" ? `<i>${t}</i>` : t}</li>`;
}).join("");

/* Taskbar buttons: icon, width, height, state, caption */
const apps = [["chrome",30,30,"run","Big Data Hackath..."],["folders",34,32,"run","raw_touch_data.xls"],["gmail",28,24,""],["fox",30,30,""],["git",32,32,""],["cmd",30,26,""],["spot",30,30,"run","Spotify"],["palette",32,32,""],["snip",32,32,""],["ctm",28,26,""],["q",32,26,""],["tab",32,32,"cur","Tableau - Book2"]];
const task = captions => apps.map(([n,w,h,s,c]) => {
  const icon = captions && n === "folders" ? "folder1" : n;
  return `<button class="tk ${s} ${captions && c ? "label" : ""}" aria-label="${c || n}"><svg width="${w}" height="${h}"><use href="#i-${icon}"/></svg>${captions && c ? c : ""}</button>`;
}).join("");
taskLeft.innerHTML = task(false);
taskRight.innerHTML = task(true);

/* Readings per student. Axis units: 186 is the left edge of the plot, 3113 the right one; the second list starts at 1568. */
const U0 = 186, UW = 2927, HI = 1568;
const students = {
2:["","338 358 376 404-412 414-456 464-470 472-513 515-798 800-838 840-858 860 876 887 895 989"],
3:["798 822 836 887 939 949-959 969 977 1033-1045 1047 1053 1061 1077 1086 1092 1098-1132 1136-1166 1170-1178 1180-1192 1194-1218 1220-1303 1305-1568","0-157 159-195 197-211 217-223 225-239 241 253 261 267-273 289-300 304-310 352 370 376 390 396 424 446 470 519-525 527 732 776 784 943 995 1027 1182 1218"],
4:["","253 322 336 364 400 414 422-430 432 450 464 472-478 499 523 531 537 543 549 555-563 567 579-593 595-601 603-609 615-643 647-667 671-677 679-685 688-718 724-744 752 760-770 774 784 790-802 806-812 816-826 828 844 852 862-874 878-889 893-1142 1144-1166 1168 1178-1192 1198 1204-1212"],
7:["1143-1148 1190 1214-1220 1228 1244 1260 1275-1287 1295 1301-1307 1309 1311 1325-1337 1343-1383 1389-1415 1417-1423 1425-1433 1437 1451-1490 1492-1506 1508-1516 1518-1554 1558-1568","0-18 20-64 66-78 80-105 107-141 145 151-237 239-259 261-296 298-306 308-364 368 376-388 412 420 428 448 454 462 472 482 488-498 500-504 509 523-529 533-539 545-555 559-587 589-593 595-611 617-669 675-681 685-703 705-711 713 719 725-738"],
8:["951 1106 1114 1132 1138-1146 1154-1166 1170-1178 1180-1186 1218-1232 1236-1252 1254-1367 1373-1401 1403-1482 1484-1538 1544 1550-1568","0-4 6-12 14-22 24-34 38 44 52-64 70 76-101 103-111 113-291 296-314 320 336 344-356 364 370 376 442"],
9:["","480 527 603 625 647 675 685 696 702-710 716-720 722-726 730-738 740-750 752-760 764 776 790-806 816 828 842-856 860-913 917-1049 1053-1082 1084-1110 1112 1120-1132 1134-1192 1194-1202 1204-1234 1236 1244 1250-1266 1277 1291-1297 1299-1303 1305 1311-1317 1353 1363-1369 1411"],
11:["1514","135 183 195 215 231 237-243 259 306-312 332-340 354 362-386 392-400 402-408 412 420-428 432 438-448 450-456 460-519 521-802 804-838 842-848 870-878 885-891 893 901 907 927"],
12:["1560","72 101 123 147-155 173-183 191-203 205 211-227 229-285 289-312 314-322"],
13:["1112 1176 1216 1250 1262 1275 1287 1299-1307 1315 1331 1337-1343 1349 1355-1387 1389-1399 1403-1423 1425-1568","0-241 243 261-267 271 283-308 318 346-354 364 382 390 396-402 464 484-493 517-525 529 535 549-557 561 575-581 585-613 619-669 671-712 714-734 736-744 756-770 800"],
14:["318 336 354 495 523 533 549-557 579 599-613 629-647 649-675 679-734 738-756 762-770 778 784 794-806 810-832 840-846 856-864 866 876 883 893 913-921 923-929 937 949-961 965 971-983 985-1005 1009 1021 1035 1041-1051 1059-1073 1075-1102 1104-1114 1116-1122 1124 1130-1150 1152-1202 1204-1256 1260-1343 1347-1433 1437-1453 1459-1465 1476-1488 1490-1500 1506 1514-1524 1538","50 66 80 88-94 101 271 316 322 392-400 480 523 531 541-547 571 585 613 633 645"],
15:["826 1025 1055-1063 1077-1082 1118 1126 1132 1150 1178 1190 1218 1230 1272-1280 1305 1325 1331-1337 1339 1351 1369 1375 1395 1415-1421 1443-1451 1457 1480 1488-1496 1498 1508 1520 1546 1556","10 40 70"],
16:["828 1029 1128 1212 1262 1299 1307-1313 1319-1331 1335 1347 1353 1361-1379 1381-1393 1395-1413 1415-1431 1437-1443 1445 1453-1463 1465-1472 1476-1482 1484-1568","0-241 243-334 336 342 352-372 378-384 396 404 414-422 434"],
17:["889 949 961 983-989 1007-1019 1027-1033 1037-1049 1055 1061-1073 1080 1086-1096 1100 1108-1114 1118 1124-1130 1136-1146 1148-1156 1158 1164 1170 1176-1184 1186-1198 1202-1268 1270-1401 1403-1445 1447-1476 1478-1516 1518-1546 1558","0-6 8-14 20 36 42 48 80 94 103 113 189 205 213 219 225 243 253-265 267 285 308 316 322 330-348 350-442 444-525 527-559 563 571-595 607 619 629 635 653"],
18:["969 1059 1116 1122-1130 1134 1142-1150 1152 1178-1186 1202-1208 1210 1232-1244 1262-1279 1291-1299 1301 1311 1319-1327 1331-1337 1339-1387 1391-1568","0-99 101-157 163-169 171-177 179 201-211 215 231 275"],
19:["1459","2 8 14 20 38 48-56 62 74-90 99 107-115 119-167 171-203 211-225 227-265 267-279 281-334 336-410 416 424 438 456 480 497 521 573-579 593 609-615 617 623-629 631 645 651 659 665 671 681-702 710-716 718-732 736-746 754"],
20:["","426 480 499-505 551 581 589-595 611 631 637-643 647 657-688 690-710 712-728 730-770 772-794 796-806 808-842 844-858 862-876 878-889 891-907 909-925 927-937 939-1049 1051-1118 1120-1166 1168 1174 1182-1196 1200-1208 1210 1226 1232-1244 1250 1260 1268-1277 1297 1323 1339 1361 1375"],
21:["1061 1114 1140 1172 1186 1198 1208 1230-1238 1248 1256-1262 1266-1367 1369-1379 1383-1409 1413-1459 1461-1568","0-382 384 390-400 402 416 472 529"]
};
const parse = (s, off) => s ? s.split(" ").map(t => { const [a,b] = t.split("-").map(Number); return [a + off, (b || a + 4) + off]; }) : [];
const rows = Object.entries(students).map(([id,[lo,hi]]) => [id, [...parse(lo,0), ...parse(hi,HI)]]);
document.querySelectorAll(".plot-top .rowlabs").forEach(el => el.innerHTML = rows.map(r => `<div>${r[0]}</div>`).join(""));

function gantt(svg, rowH, top, barH, color, coarse) {
  const k = svg.getBoundingClientRect().width / UW;
  svg.innerHTML = rows.map(([id, segs], i) => {
    const out = [];
    for (const [a,b] of segs) {
      let x0 = (a - U0) * k, x1 = (b - U0) * k;
      if (coarse) { x0 -= .3; x1 += .4; } else { x0 = Math.round(x0); x1 = x0 + Math.max(2, Math.round((b - a) * k)); }
      const last = out[out.length - 1];
      if (coarse && last && x0 - last[1] < .5) last[1] = x1; else out.push([x0, x1]);
    }
    const y = top + i * rowH;
    return `<path fill="${color}" d="${out.map(([p,q]) => `M${+p.toFixed(1)} ${y}H${+q.toFixed(1)}v${barH}H${+p.toFixed(1)}z`).join("")}"><title>Student ${id}</title></path>`;
  }).join("");
}
function axis(svg, from, to, step, digits, size, labelY, titleY) {
  let s = "";
  for (let n = 0; from + n * step <= to + 1e-6; n++) {
    const v = from + n * step, p = (v - .2463) / 1.1983 * 100;
    s += `<line x1="${p}%" x2="${p}%" y1="0" y2="4" stroke="#d2d2d2"/><text x="${n === 0 && from < .3 ? p + .55 : p}%" y="${labelY}" text-anchor="middle">${v.toFixed(digits)}</text>`;
  }
  svg.innerHTML = `<g font-size="${size}" fill="#555">${s}<text x="50%" y="${titleY}" text-anchor="middle">Pitch (Degrees)</text></g>`;
}
function drawHist() {
  const heights = [2,14,14,94,299,330,178,205,123,136,15];
  let s = `<path d="M50.500 0V321M43 320.500H711M710.500 0V325" stroke="#d2d2d2" fill="none"/>`;
  [["10K",43],["8K",98],["6K",154],["4K",209],["2K",265],["0K",313]].forEach(([t,y],i) => {
    s += `<text x="43" y="${y+4}" text-anchor="end">${t}</text>` + (i < 5 ? `<path d="M45 ${y+.5}h5" stroke="#d2d2d2"/>` : "");
  });
  heights.forEach((h,i) => {
    s += `<rect x="${57+60*i}" y="${320-h}" width="45" height="${h}" fill="#1976b7"/><path d="M${50.5+60*i} 320v5" stroke="#d2d2d2"/><text x="${80+60*i}" y="334" text-anchor="middle" font-weight="700">${((i+3)/10).toFixed(1)}</text>`;
  });
  s += `<text x="17" y="134" text-anchor="middle" transform="rotate(-90 17 134)">Count of Pitch (Degrees)</text>`;
  hist.innerHTML = `<g font-family="Liberation Sans,Arial,sans-serif" font-size="11" fill="#555">${s}</g>`;
}
function draw() {
  gantt(plotMain, 20, 2, 15, "#1f77b4", false);
  gantt(plotSmall, 18, 2, 13, "#1976b7", true);
  axis(axisMain, .25, 1.4, .05, 2, 11, 16, 31);
  axis(axisSmall, .3, 1.4, .1, 1, 10, 15, 29);
  drawHist();
}
draw();
addEventListener("resize", draw);

/* Show Me chart-type thumbnails, 40 x 26 each */
const B="#a9b5bd",T="#d9cbc0",G="#c6cfc6",D="#a8aea8";
const r=(x,y,w,h,c)=>`<rect x="${x}" y="${y}" width="${w}" height="${h}" fill="${c}"/>`;
const c=(x,y,q,f,st)=>`<circle cx="${x}" cy="${y}" r="${q}" fill="${f}" ${st?`stroke="${st}"`:""}/>`;
const l=(d,col)=>`<path d="${d}" fill="none" stroke="${col}"/>`;
const p=(d,col)=>`<path d="${d}" fill="${col}"/>`;
const land="M1 4l5-1 6-1 3 3-3 4-3 4-3-1-3-4zM9 14l5 1 1 3-4 6-2-5zM19 3l7-1 11 1 2 3-4 5-3 4-3-4-3 1-4-3-3-2zM18 11l6 1 2 3-4 7-2-5zM33 17l4 0 1 4-4-1z";
const marksT=[
 r(0,0,40,8,"#f3f3f3")+r(0,17,40,9,"#f3f3f3")+r(1,4,3,2,"#aaa")+r(1,13,5,2,"#aaa")+r(1,21,3,2,"#aaa")+`<g font-family="DejaVu Sans Mono,monospace" font-size="6" fill="#777"><text x="10" y="7">123</text><text x="26" y="7">123</text><text x="10" y="16">123</text><text x="26" y="16">123</text><text x="10" y="24">123</text><text x="26" y="24">123</text></g>`,
 r(1,5,3,1,"#bbb")+r(1,13,5,1,"#bbb")+r(1,20,3,1,"#bbb")+r(10,2,5,5,D)+r(17,2,5,5,"#c2b2b8")+r(25,2,5,5,G)+r(33,4,3,3,G)+r(10,10,5,4,G)+r(18,11,3,3,G)+r(25,9,5,5,D)+r(32,9,5,5,G)+r(9,16,7,7,G)+r(17,17,5,5,D)+r(24,16,8,8,G)+r(33,17,5,5,D),
 r(8,0,16,8,"#eaeee9")+r(25,0,15,8,"#e4e9e4")+r(8,9,16,8,"#efebe9")+r(25,9,15,8,"#e9ecea")+r(8,18,16,8,"#eee")+r(25,18,15,8,"#e9e9e9")+r(1,5,3,1,"#bbb")+r(1,13,5,1,"#bbb")+r(1,21,3,1,"#bbb")+`<g font-size="5" fill="#888" text-anchor="end"><text x="22" y="7">172</text><text x="38" y="7">1272</text><text x="22" y="15">1347</text><text x="38" y="15">1180</text><text x="22" y="24">3582</text><text x="38" y="24">821</text></g>`,
 p(land,"#dcdcdc")+c(5,9,1.5,B)+c(12,4,1,B)+c(9,17,2,B)+c(28,10,1.5,B)+c(33,8,1,B)+c(34,20,1.5,B),
 p(land,G)+p("M18 11l6 1 2 3-4 7-2-5zM19 3l7-1 3 6-6 2zM33 17l5 0 0 4-4-1z",D),
 c(20,13,10,"#c9d2c9")+p("M20 13V3A10 10 0 0 0 10 14z","#dccdd0")+p("M20 13V3A10 10 0 0 1 29 9z","#c6cad6")+p("M20 13L29 9A10 10 0 0 1 26 21z","#e0d2c8"),
 r(0,3,11,3,B)+r(0,9,36,3,B)+r(0,15,6,3,B)+r(0,21,26,3,B),
 r(4,3,5,8,B)+r(4,11,5,15,T)+r(13,10,5,6,B)+r(13,16,5,10,T)+r(22,4,5,17,B)+r(22,21,5,5,T)+r(31,16,5,3,B)+r(31,19,5,7,T),
 r(3,6,4,20,B)+r(7,16,4,10,T)+l("M13.500 0v26M26.500 0v26","#ddd")+r(16,19,4,7,B)+r(20,2,4,24,T)+r(29,16,4,10,B)+r(33,11,4,15,T),
 r(3,3,17,10,G)+r(3,14,17,9,G)+r(21,3,8,8,D)+r(30,3,7,8,G)+r(21,12,5,6,T)+r(27,12,5,6,G)+r(33,12,4,6,D)+r(21,19,5,4,D)+r(27,19,5,4,D)+r(33,19,4,4,D),
 c(8,6,3.5,"none",B)+c(8,11,3.500,"none",G)+c(8,17,3.500,"none",T)+c(20,8,3.500,"none",T)+c(20,18,3.500,"none","#b5c9b5")+c(20,25,3.500,"none",B)+c(32,9,3.500,"none","#b5c9b5")+c(32,13,3.500,"none",B)+c(32,23,3.500,"none",T),
 l("M19.500 0v26","#ddd")+c(5,9,3,"none",B)+c(5,12,3,"none",B)+c(5,20,3,"none",B)+c(14,4,3,"none",T)+c(14,11,3,"none",T)+c(14,15,3,"none",T)+c(25,5,3,"none",B)+c(25,17,3,"none",B)+c(25,21,3,"none",B)+c(34,8,3,"none",T)+c(34,12,3,"none",T)+c(34,20,3,"none",T),
 l("M0 7l5-5 12 13 7-8 7 7 9-9","#8fa3b3")+l("M0 12l6 6 11-12 15 14 8-4","#c9ab98")+l("M0 19l6 5 15-7 11 8 8-3","#9bb89b"),
 l("M20.500 0v26","#ddd")+l("M1 7l6-3 10 9M23 10l9-8 7 4","#8fa3b3")+l("M1 12l14-5 3 5M23 20l15-15","#c9ab98")+l("M1 17l5-2 6 6 5-2M23 23l5-6 4 2 7-9","#9bb89b"),
 l("M0 3h3M0 7h3M0 11h3M0 15h3M0 19h3M0 23h3M37 3h3M37 9h3M37 15h3M37 21h3",T)+l("M5 9l5-5 5 6 6-3 6 6h8","#a8b9c6")+l("M5 15l5-4 7 8 6-2 6 4 7-5","#d9c4b4"),
 p("M0 13L13 3 27 12 40 9V26H0z","#b9c2c9")+p("M0 19L13 9 27 19 40 11V26H0z","#dacbc0")+p("M0 25L13 15 27 22 40 19V26H0z","#c8d2c8"),
 p("M1 8L6 2 12 17 17 7 19 10V26H1z","#b9c2c9")+p("M1 17L6 10 12 20 17 14 19 17V26H1z","#dacbc0")+p("M1 24L6 17 12 25 19 19V26H1z","#c8d2c8")+l("M20.500 0v26","#ddd")+p("M22 5L32 14 39 10V26H22z","#b9c2c9")+p("M22 12L32 16 39 13V26H22z","#c8d2c8"),
 l("M0 3h3M0 7h3M0 11h3M0 15h3M0 19h3M0 23h3M37 3h3M37 9h3M37 15h3M37 21h3",T)+r(6,13,4,13,B)+r(12,9,4,17,B)+r(18,17,4,9,B)+r(24,2,4,24,B)+r(30,13,4,13,B)+l("M7 9l6-6 7 9 6-6 7 6","#d9bfb0"),
 c(4,23,2,"none",B)+c(10,16,2,"none",B)+c(16,13,2,"none",B)+c(24,10,2,"none",B)+c(30,13,2,"none",B)+c(31,3,2,"none",B)+l("M10 20v5M7.500 22.500h5M15 17v5M12.500 19.500h5M20 2v5M17.500 4.500h5M23 14v5M20.500 16.500h5M35 6v5M32.500 8.500h5",T),
 [24,20,11,6,3,3,6,11,20,24].map((y,i)=>r(2+i*3.600,y,3,26-y,"#b9b9b9")).join(""),
 [6,15,24,33].map((x,i)=>l(`M${x+.5} ${6-i}V23M${x-1} ${6-i+.5}h3M${x-1} 22.500h3`,"#999")+r(x-2,11-i*2,5,4,"#ccc")+r(x-2,15-i,5,4,"#aaa")).join(""),
 r(0,2,6,5,"#2f6fa3")+r(15,2,2,5,"#c23c3c")+r(18,2,2,5,"#e0802b")+r(24,2,1,5,"#2f6fa3")+r(28,2,5,5,"#e0802b")+r(0,10,3,5,"#e0802b")+r(4,10,2,5,"#3a9440")+r(9,10,3,5,"#2f6fa3")+r(15,10,13,5,"#2f6fa3")+r(31,10,6,5,"#3a9440")+r(2,18,6,5,"#e0802b")+r(9,18,1,5,"#3a9440")+r(11,18,2,5,"#c23c3c")+r(20,18,4,5,"#2f6fa3")+r(30,18,3,5,"#c23c3c"),
 r(0,3,36,5,"#e8ecef")+r(0,4,20,3,B)+r(22,3,1,5,"#555")+r(0,11,36,5,"#e8ecef")+r(0,12,31,3,B)+r(28,11,1,5,"#555")+r(0,19,38,5,"#e8ecef")+r(0,20,19,3,B)+r(34,19,1,5,"#555"),
 c(10,12,8,"#c5cbd5")+c(24,7,4.500,"#dfd0c8")+c(23,16,4,"#c9b6ad")+c(33,13,4.500,"#cbd5cb")+c(17,22,2.500,"#c6d0c6")
];
thumbs.innerHTML = marksT.map((m,i)=>`<button class="thumb ${i===21?"on":""}" aria-label="Chart type ${i+1}"><svg width="40" height="26">${m}</svg></button>`).join("");
</script>
</body>
</html>
